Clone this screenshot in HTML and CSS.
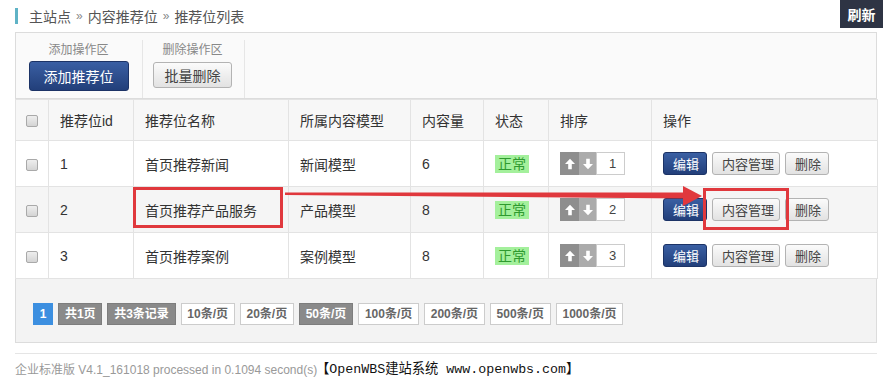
FILE: index.html
```html
<!DOCTYPE html>
<html lang="zh-CN">
<head>
<meta charset="utf-8">
<title>推荐位列表</title>
<link rel="stylesheet" href="styles.css">
</head>
<body>
<div class="page">
  <header class="top">
    <div class="crumb"><span class="crumb-bar"></span><span>主站点</span><span class="sep">»</span><span>内容推荐位</span><span class="sep">»</span><span>推荐位列表</span></div>
    <button class="refresh">刷新</button>
  </header>

  <main class="main">
    <section class="toolbar">
      <div class="tgroup tgroup-add">
        <div class="tlabel">添加操作区</div>
        <button class="btn btn-primary btn-lg">添加推荐位</button>
      </div>
      <div class="tgroup tgroup-del">
        <div class="tlabel">删除操作区</div>
        <button class="btn btn-default btn-md">批量删除</button>
      </div>
    </section>

    <table class="grid">
      <colgroup>
        <col class="c-cb"><col class="c-id"><col class="c-name"><col class="c-model"><col class="c-count"><col class="c-state"><col class="c-sort"><col class="c-ops">
      </colgroup>
      <thead>
        <tr>
          <th class="cbcell"><span class="cb"></span></th>
          <th>推荐位id</th>
          <th>推荐位名称</th>
          <th>所属内容模型</th>
          <th>内容量</th>
          <th>状态</th>
          <th>排序</th>
          <th>操作</th>
        </tr>
      </thead>
      <tbody>
        <tr>
          <td class="cbcell"><span class="cb"></span></td>
          <td>1</td>
          <td>首页推荐新闻</td>
          <td>新闻模型</td>
          <td>6</td>
          <td><span class="badge">正常</span></td>
          <td><div class="sorter"><span class="sa up"><svg viewBox="0 0 12 12" width="12" height="12"><path d="M6 0.8 L11 6 H7.8 V11.2 H4.2 V6 H1 Z" fill="#fff"/></svg></span><span class="sa down"><svg viewBox="0 0 12 12" width="12" height="12"><path d="M6 11.2 L11 6 H7.8 V0.8 H4.2 V6 H1 Z" fill="#fff"/></svg></span><span class="sinput">1</span></div></td>
          <td><div class="ops"><button class="btn btn-primary btn-sm">编辑</button><button class="btn btn-default btn-sm">内容管理</button><button class="btn btn-default btn-sm">删除</button></div></td>
        </tr>
        <tr class="alt">
          <td class="cbcell"><span class="cb"></span></td>
          <td>2</td>
          <td>首页推荐产品服务</td>
          <td>产品模型</td>
          <td>8</td>
          <td><span class="badge">正常</span></td>
          <td><div class="sorter"><span class="sa up"><svg viewBox="0 0 12 12" width="12" height="12"><path d="M6 0.8 L11 6 H7.8 V11.2 H4.2 V6 H1 Z" fill="#fff"/></svg></span><span class="sa down"><svg viewBox="0 0 12 12" width="12" height="12"><path d="M6 11.2 L11 6 H7.8 V0.8 H4.2 V6 H1 Z" fill="#fff"/></svg></span><span class="sinput">2</span></div></td>
          <td><div class="ops"><button class="btn btn-primary btn-sm">编辑</button><button class="btn btn-default btn-sm">内容管理</button><button class="btn btn-default btn-sm">删除</button></div></td>
        </tr>
        <tr>
          <td class="cbcell"><span class="cb"></span></td>
          <td>3</td>
          <td>首页推荐案例</td>
          <td>案例模型</td>
          <td>8</td>
          <td><span class="badge">正常</span></td>
          <td><div class="sorter"><span class="sa up"><svg viewBox="0 0 12 12" width="12" height="12"><path d="M6 0.8 L11 6 H7.8 V11.2 H4.2 V6 H1 Z" fill="#fff"/></svg></span><span class="sa down"><svg viewBox="0 0 12 12" width="12" height="12"><path d="M6 11.2 L11 6 H7.8 V0.8 H4.2 V6 H1 Z" fill="#fff"/></svg></span><span class="sinput">3</span></div></td>
          <td><div class="ops"><button class="btn btn-primary btn-sm">编辑</button><button class="btn btn-default btn-sm">内容管理</button><button class="btn btn-default btn-sm">删除</button></div></td>
        </tr>
      </tbody>
    </table>

    <div class="pager">
      <span class="pg pg-cur">1</span>
      <span class="pg pg-info">共1页</span>
      <span class="pg pg-info">共3条记录</span>
      <span class="pg">10条/页</span>
      <span class="pg">20条/页</span>
      <span class="pg pg-info">50条/页</span>
      <span class="pg">100条/页</span>
      <span class="pg">200条/页</span>
      <span class="pg">500条/页</span>
      <span class="pg">1000条/页</span>
    </div>

    <footer class="foot">
      <span class="ver">企业标准版 V4.1_161018 processed in 0.1094 second(s)</span>
      <span class="mark">【OpenWBS建站系统 www.openwbs.com】</span>
    </footer>
  </main>

  <svg class="annot" width="883" height="387" viewBox="0 0 883 387">
    <rect x="134.5" y="188.5" width="147" height="38" fill="none" stroke="#e0383d" stroke-width="3"/>
    <rect x="704.5" y="189.5" width="83" height="39" fill="none" stroke="#e0383d" stroke-width="3"/>
    <polygon points="285,192.5 686,192.5 686,198.5 285,195" fill="#e0383d"/>
    <polygon points="683,186 702,196 683,206" fill="#e0383d"/>
  </svg>
</div>
</body>
</html>
```

FILE: styles.css
```css
* { box-sizing: border-box; }

html, body {
  margin: 0;
  padding: 0;
  background: #fff;
}

body {
  font-family: "Liberation Sans", "Noto Sans CJK SC", sans-serif;
  font-size: 14px;
  color: #333;
}

.page {
  position: relative;
  width: 883px;
  height: 387px;
  overflow: hidden;
}

/* top */
.top {
  display: flex;
  justify-content: space-between;
  align-items: flex-start;
  height: 32px;
  padding-left: 15px;
}

.crumb {
  display: flex;
  align-items: center;
  gap: 4px;
  margin-top: 7px;
  height: 17px;
  font-size: 14px;
  color: #555;
}

.crumb-bar {
  width: 3px;
  height: 16px;
  background: #5fb3c6;
  margin-right: 7px;
}

.crumb .sep {
  color: #888;
  font-size: 12px;
  margin: 0 1px;
}

.refresh {
  width: 43px;
  height: 28px;
  border: 0;
  margin: 0;
  padding: 0;
  background: #2e3444;
  color: #fff;
  font-family: inherit;
  font-size: 14px;
  font-weight: bold;
}

/* main */
.main {
  margin: 0 6px 0 15px;
}

.toolbar {
  display: flex;
  height: 67px;
  border: 1px solid #dcdcdc;
  background: #fafafa;
}

.tgroup {
  display: flex;
  flex-direction: column;
  align-items: center;
  margin-top: 7px;
  border-right: 1px solid #e6e6e6;
}

.tgroup-add {
  width: 127px;
  padding: 0 13px 0 12px;
}

.tgroup-del {
  width: 102px;
  padding: 0 12px 0 10px;
}

.tlabel {
  margin-top: 2px;
  font-size: 12px;
  line-height: 16px;
  color: #888;
}

/* buttons */
.btn {
  font-family: inherit;
  border-radius: 3px;
  padding: 0;
  margin: 0;
  white-space: nowrap;
}

.btn-primary {
  background: linear-gradient(#3a5fa3, #223f7a);
  border: 1px solid #1c3366;
  color: #fff;
}

.btn-default {
  background: linear-gradient(#fbfbfb, #e2e2e2);
  border: 1px solid #b3b3b3;
  color: #444;
}

.btn-lg {
  width: 100px;
  height: 30px;
  margin-top: 3px;
  font-size: 14px;
}

.btn-md {
  width: 79px;
  height: 26px;
  margin-top: 4px;
  font-size: 14px;
}

.btn-sm {
  height: 23px;
  font-size: 13px;
  padding: 0 9px;
}

/* table */
.grid {
  width: 862px;
  border-collapse: collapse;
  table-layout: fixed;
  border: 1px solid #dcdcdc;
  border-top: 0;
}

.c-cb { width: 33px; }
.c-id { width: 85px; }
.c-name { width: 155px; }
.c-model { width: 122px; }
.c-count { width: 73px; }
.c-state { width: 65px; }
.c-sort { width: 103px; }
.c-ops { width: 226px; }

.grid th,
.grid td {
  border: 1px solid #e3e3e3;
  padding: 0 11px;
  text-align: left;
  font-weight: normal;
  font-size: 14px;
  color: #333;
  white-space: nowrap;
}

.grid th {
  height: 41px;
  background: #f7f7f7;
}

.grid td {
  height: 46px;
}

.grid tr.alt td {
  background: #f5f5f5;
}

.grid .cbcell {
  padding: 0;
  text-align: center;
}

.cb {
  display: inline-block;
  vertical-align: middle;
  width: 12px;
  height: 12px;
  border: 1px solid #a9a9a9;
  border-radius: 2px;
  background: linear-gradient(#eeeeee, #d4d4d4);
}

.badge {
  display: inline-block;
  padding: 0 3px;
  height: 18px;
  line-height: 18px;
  background: #a4f09c;
  color: #2f9a2f;
  font-size: 14px;
}

.sorter {
  display: flex;
  height: 23px;
}

.sa {
  display: flex;
  align-items: center;
  justify-content: center;
  height: 23px;
}

.sa.up {
  width: 19px;
  background: #8e8e8e;
}

.sa.down {
  width: 17px;
  background: #ababab;
}

.sinput {
  width: 29px;
  height: 23px;
  border: 1px solid #cccccc;
  background: #fff;
  line-height: 21px;
  text-align: center;
  padding-left: 4px;
  font-size: 13px;
  color: #444;
}

.ops {
  display: flex;
  gap: 5px;
}

.ops .btn-primary { width: 44px; }
.ops .btn-default:nth-child(2) { width: 68px; }
.ops .btn-default:nth-child(3) { width: 44px; }

/* pager */
.pager {
  display: flex;
  gap: 5px;
  padding: 24px 17px 17px;
  border: 1px solid #dcdcdc;
  border-top: 0;
  background: #f3f3f3;
}

.pg {
  height: 22px;
  line-height: 20px;
  padding: 0 5.75px;
  border: 1px solid #cccccc;
  background: #fff;
  color: #666;
  font-size: 12px;
  font-weight: bold;
  white-space: nowrap;
}

.pg-cur {
  background: #3c8fe0;
  border-color: #3c8fe0;
  color: #fff;
}

.pg-info {
  background: #8a8a8a;
  border-color: #7d7d7d;
  color: #fff;
}

/* footer */
.foot {
  position: relative;
  margin-top: 10px;
  border-top: 1px solid #e5e5e5;
  padding-top: 7px;
  height: 34px;
}

.ver {
  font-size: 12px;
  line-height: 16px;
  color: #999;
}

.mark {
  position: absolute;
  left: 301px;
  top: 7px;
  font-family: "Liberation Mono", "Noto Sans CJK SC", monospace;
  font-size: 13.3px;
  line-height: 17px;
  color: #111;
  white-space: nowrap;
}

/* annotations overlay */
.annot {
  position: absolute;
  left: 0;
  top: 0;
  pointer-events: none;
}
```
